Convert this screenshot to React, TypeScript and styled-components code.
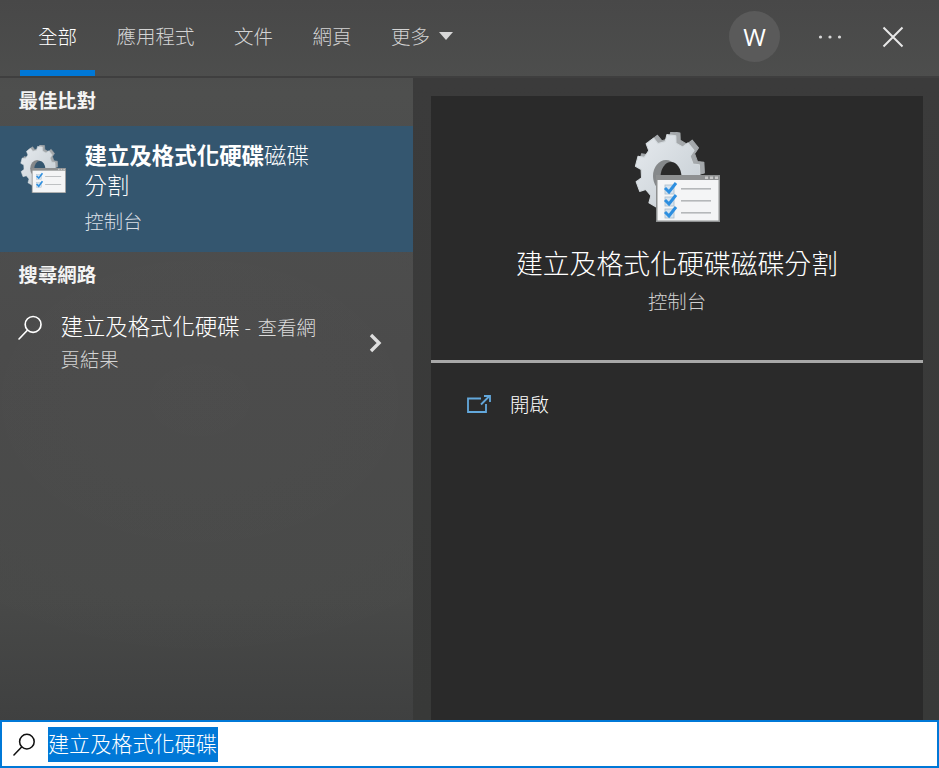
import React, { useId } from "react";
import styled, { createGlobalStyle } from "styled-components";

const Global = createGlobalStyle`
  html, body { margin: 0; padding: 0; height: 100%; background: #3d3d3d; }
  #root { height: 100%; }
  * { box-sizing: border-box; }
`;

const FONT = `"Noto Sans CJK TC", "Noto Sans", sans-serif`;

const Shell = styled.div`
  width: 939px;
  height: 768px;
  display: flex;
  flex-direction: column;
  overflow: hidden;
  font-family: ${FONT};
  font-weight: 300;
  color: #fff;
  background:
    radial-gradient(ellipse 420px 300px at 200px 400px, rgba(255, 255, 255, 0.015), transparent),
    linear-gradient(180deg, #484848 0%, #4e4f4e 12%, #4a4a4a 45%, #484948 78%, #3f4040 94%);
`;

const Header = styled.header`
  height: 78px;
  flex: none;
  display: flex;
  align-items: stretch;
  padding: 0 35px 0 18.25px;
  border-bottom: 2px solid #3f3f3f;
`;

const Tabs = styled.nav`
  display: flex;
  flex: 1;
`;

const Tab = styled.div<{ $active?: boolean }>`
  position: relative;
  display: flex;
  align-items: center;
  gap: 9px;
  padding: 0 19.75px 4px;
  font-size: 19.5px;
  line-height: 1;
  color: ${(p) => (p.$active ? "#ffffff" : "#d4d4d4")};
  &::after {
    content: "";
    display: ${(p) => (p.$active ? "block" : "none")};
    position: absolute;
    left: 1.75px;
    right: 1.75px;
    bottom: 0;
    height: 6px;
    background: #0078d7;
  }
`;

const Caret = styled.span`
  width: 0;
  height: 0;
  border-left: 7.5px solid transparent;
  border-right: 7.5px solid transparent;
  border-top: 8px solid #d8d8d8;
`;

const Actions = styled.div`
  display: flex;
  align-items: center;
  padding-bottom: 3px;
`;

const Avatar = styled.div`
  width: 51px;
  height: 51px;
  border-radius: 50%;
  background: #5a5a5a;
  display: flex;
  align-items: center;
  justify-content: center;
  padding-top: 2px;
  font-family: "Open Sans", sans-serif;
  font-weight: 400;
  font-size: 24.5px;
  line-height: 1;
  margin-right: 38px;
`;

const Dots = styled.svg`
  width: 24px;
  height: 6px;
  margin-right: 40px;
`;

const CloseIcon = styled.svg`
  width: 22px;
  height: 22px;
`;

const Body = styled.main`
  flex: 1;
  min-height: 0;
  display: flex;
`;

const Left = styled.section`
  width: 413px;
  flex: none;
  display: flex;
  flex-direction: column;
`;

const SectionTitle = styled.h2`
  height: 48px;
  margin: 0;
  padding: 0 18.5px 6px;
  display: flex;
  align-items: center;
  font-size: 19.4px;
  font-weight: 700;
  color: #f4f4f4;
`;

const BestMatch = styled.div`
  height: 126px;
  display: flex;
  align-items: flex-start;
  padding: 13px 0 0 20px;
  background: #34566f;
`;

const BestIconSlot = styled.div`
  width: 64.5px;
  flex: none;
  padding-top: 6px;
  filter: blur(0.6px);
`;

const BestText = styled.div`
  width: 240px;
`;

const ResultTitle = styled.div`
  font-size: 22.45px;
  line-height: 30px;
  color: #fff;
  b {
    font-weight: 700;
  }
`;

const ResultSub = styled.div`
  margin-top: 7px;
  font-size: 19.3px;
  line-height: 30px;
  color: #d8dfe5;
`;

const WebRow = styled.div`
  display: flex;
  align-items: flex-start;
  padding: 10px 30px 0 18px;
`;

const WebIconSlot = styled.div`
  width: 42.5px;
  flex: none;
  padding-top: 5px;
`;

const WebText = styled.div`
  width: 262px;
  font-size: 22.4px;
  line-height: 31px;
  color: #fff;
`;

const WebHint = styled.span`
  font-size: 19.5px;
  word-spacing: 2px;
  color: #dcdcdc;
`;

const WebSecond = styled.span`
  font-size: 19.4px;
  color: #d4d4d4;
`;

const Chevron = styled.svg`
  margin-left: auto;
  margin-top: 23px;
  width: 15px;
  height: 20px;
`;

const Right = styled.section`
  flex: 1;
  display: flex;
  padding: 18px 16px 0 18px;
  background: linear-gradient(180deg, #3b3b3b, #383938);
`;

const Card = styled.div`
  flex: 1;
  display: flex;
  flex-direction: column;
  background: #2a2a2a;
`;

const CardHero = styled.div`
  height: 267px;
  flex: none;
  display: flex;
  flex-direction: column;
  align-items: center;
  padding-top: 36px;
  border-bottom: 3px solid #a8a8a8;
`;

const HeroTitle = styled.div`
  margin-top: 21px;
  font-size: 26.85px;
  line-height: 40px;
  color: #fff;
`;

const HeroSub = styled.div`
  margin-top: 3px;
  font-size: 19.4px;
  line-height: 30px;
  color: #cfcfcf;
`;

const OpenRow = styled.div`
  display: flex;
  align-items: center;
  padding: 25px 0 0 36px;
  gap: 19px;
  font-size: 19.4px;
  line-height: 32px;
  color: #fff;
`;

const SearchBar = styled.footer`
  height: 48px;
  flex: none;
  display: flex;
  align-items: center;
  padding: 0 0 0 11px;
  background: #fff;
  border: 2px solid #0078d7;
`;

const SearchIconSlot = styled.div`
  width: 35px;
  flex: none;
  display: flex;
`;

const Selection = styled.span`
  display: block;
  width: 170px;
  height: 35px;
  background: #0078d7;
  color: #fff;
  font-size: 21.1px;
  line-height: 32px;
  white-space: nowrap;
`;

function gearPath(cx: number, cy: number, outer: number, inner: number, teeth: number) {
  const pts: string[] = [];
  const step = (Math.PI * 2) / teeth;
  for (let i = 0; i < teeth; i++) {
    const a = i * step - Math.PI / 2 + 0.12;
    const list: [number, number][] = [
      [a - step * 0.3, inner],
      [a - step * 0.2, outer],
      [a + step * 0.2, outer],
      [a + step * 0.3, inner],
    ];
    for (const [t, r] of list) {
      pts.push(`${(cx + r * Math.cos(t)).toFixed(2)} ${(cy + r * Math.sin(t)).toFixed(2)}`);
    }
  }
  return `M${pts.join("L")}Z`;
}

const ControlIcon: React.FC<{ size: number; rows: number; bg: string }> = ({ size, rows, bg }) => {
  const id = useId();
  const rowYs = rows === 3 ? [56, 68, 80] : [58, 73];
  return (
    <svg width={size} height={(size * 90) / 86} viewBox="0 0 86 90" style={{ display: "block" }}>
      <defs>
        <linearGradient id={id} x1="0" y1="0" x2="1" y2="1">
          <stop offset="0" stopColor="#e6eaee" />
          <stop offset="1" stopColor="#c4ccd2" />
        </linearGradient>
      </defs>
      <g transform="translate(0 -6) scale(1 1.15)">
        <path d={gearPath(37.5, 38, 33, 27, 9)} fill="#a4a8ab" strokeLinejoin="round" stroke="#a4a8ab" />
        <path d={gearPath(33.5, 40, 32.5, 26.5, 9)} fill={`url(#${id})`} strokeLinejoin="round" stroke="#d4dade" />
      </g>
      <ellipse cx="32" cy="44" rx="13" ry="16" fill="#85888a" />
      <ellipse cx="37" cy="45" rx="10.5" ry="15" fill={bg} />
      <rect x="22" y="43" width="64" height="47" fill="#8e9091" />
      <rect x="23.5" y="48" width="61" height="40.5" fill="#f4f5f6" />
      <rect x="71" y="44.5" width="3" height="2.5" fill="#c8c8c8" />
      <rect x="76" y="44.5" width="3" height="2.5" fill="#c8c8c8" />
      <rect x="81" y="44.5" width="3" height="2.5" fill="#c8c8c8" />
      {rowYs.map((y) => (
        <g key={y}>
          <rect x="31" y={y - 3} width="9" height="9" fill="#d5e3ef" stroke="#a9bccb" strokeWidth="0.8" />
          <path d={`M31 ${y}l4 4 7-9`} fill="none" stroke="#2d8fe0" strokeWidth="3" />
          <rect x="47" y={y} width="30" height="1.6" fill="#b5b8ba" />
        </g>
      ))}
    </svg>
  );
};

const SearchGlyph: React.FC<{ color: string; size: number }> = ({ color, size }) => (
  <svg width={size} height={size} viewBox="0 0 24 24" fill="none" stroke={color} strokeWidth="1.6">
    <circle cx="14.5" cy="9" r="7.6" />
    <path d="M9 14.6 1 23" strokeLinecap="round" />
  </svg>
);

export default function App() {
  return (
    <Shell>
      <Global />
      <Header>
        <Tabs>
          <Tab $active>全部</Tab>
          <Tab>應用程式</Tab>
          <Tab>文件</Tab>
          <Tab>網頁</Tab>
          <Tab>
            更多
            <Caret />
          </Tab>
        </Tabs>
        <Actions>
          <Avatar>W</Avatar>
          <Dots viewBox="0 0 24 6">
            <circle cx="2.5" cy="3" r="1.6" fill="#d8d8d8" />
            <circle cx="12" cy="3" r="1.6" fill="#d8d8d8" />
            <circle cx="21.5" cy="3" r="1.6" fill="#d8d8d8" />
          </Dots>
          <CloseIcon viewBox="0 0 22 22" fill="none" stroke="#e8e8e8" strokeWidth="2">
            <path d="M1.5 1.5 20.5 20.5M20.5 1.5 1.5 20.5" />
          </CloseIcon>
        </Actions>
      </Header>
      <Body>
        <Left>
          <SectionTitle>最佳比對</SectionTitle>
          <BestMatch>
            <BestIconSlot>
              <ControlIcon size={46} rows={2} bg="#34566f" />
            </BestIconSlot>
            <BestText>
              <ResultTitle>
                <b>建立及格式化硬碟</b>磁碟 分割
              </ResultTitle>
              <ResultSub>控制台</ResultSub>
            </BestText>
          </BestMatch>
          <SectionTitle>搜尋網路</SectionTitle>
          <WebRow>
            <WebIconSlot>
              <SearchGlyph color="#ffffff" size={25} />
            </WebIconSlot>
            <WebText>
              建立及格式化硬碟 <WebHint>- 查看網</WebHint>
              <br />
              <WebSecond>頁結果</WebSecond>
            </WebText>
            <Chevron viewBox="0 0 15 20" fill="none" stroke="#dedede" strokeWidth="3.4">
              <path d="M3 2l8 8-8 8" />
            </Chevron>
          </WebRow>
        </Left>
        <Right>
          <Card>
            <CardHero>
              <ControlIcon size={86} rows={3} bg="#2a2a2a" />
              <HeroTitle>建立及格式化硬碟磁碟分割</HeroTitle>
              <HeroSub>控制台</HeroSub>
            </CardHero>
            <OpenRow>
              <svg width="24" height="18" viewBox="0 0 24 18" fill="none" stroke="#63a8dc" strokeWidth="1.8">
                <path d="M14 3.5H1v13.5h18V9" />
                <path d="M14 9.5 22 1.5" />
                <path d="M17 1h6v6" fill="none" />
              </svg>
              <span>開啟</span>
            </OpenRow>
          </Card>
        </Right>
      </Body>
      <SearchBar>
        <SearchIconSlot>
          <SearchGlyph color="#111111" size={23} />
        </SearchIconSlot>
        <Selection>建立及格式化硬碟</Selection>
      </SearchBar>
    </Shell>
  );
}
